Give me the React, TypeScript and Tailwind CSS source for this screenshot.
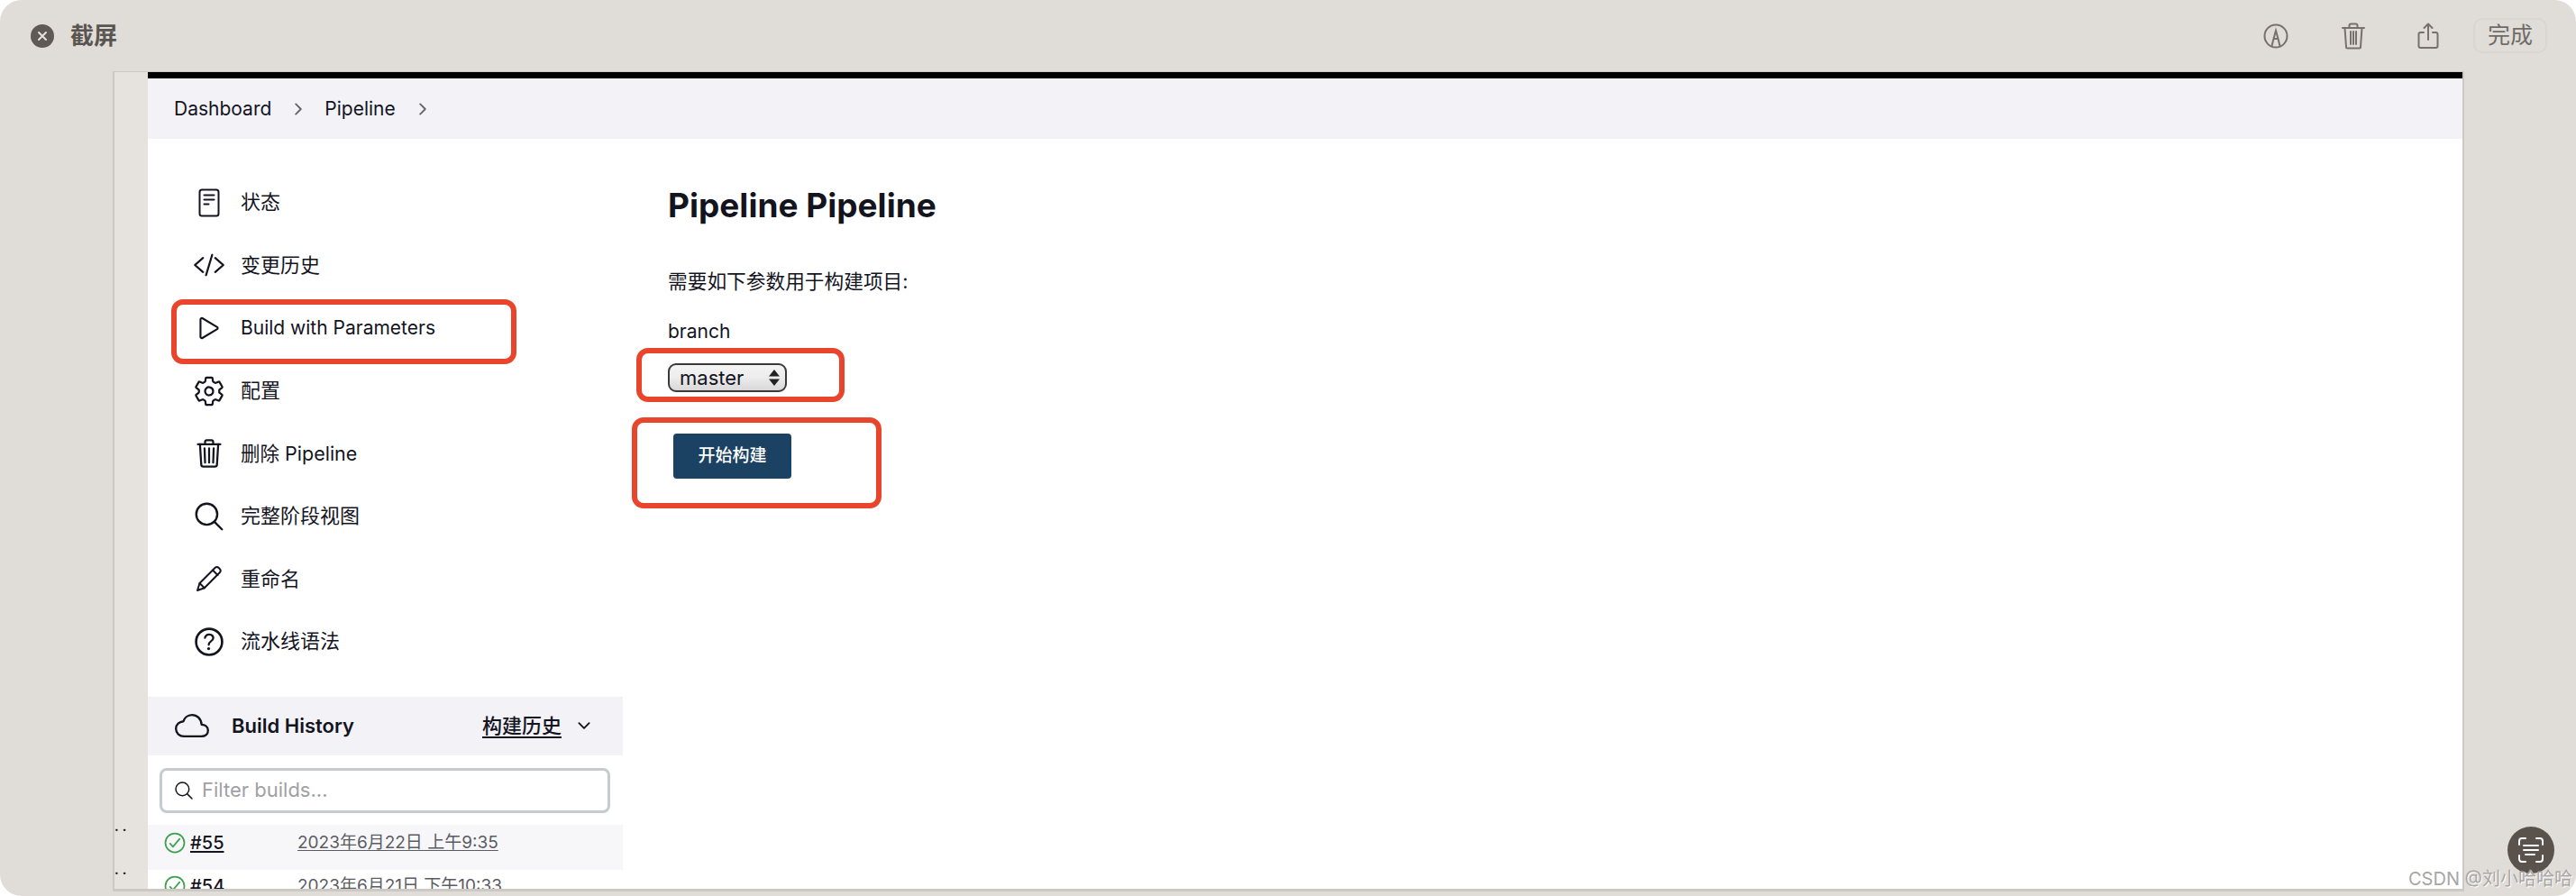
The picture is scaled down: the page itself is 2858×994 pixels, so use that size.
import {
  IoCheckmarkCircleOutline,
  IoChevronDown,
  IoChevronForward,
  IoCloudOutline,
  IoCodeSlashOutline,
  IoHelpCircleOutline,
  IoPlayOutline,
  IoSearchOutline,
  IoSettingsOutline,
  IoTrashOutline,
} from 'react-icons/io5'

const FONT = "font-['Inter','Noto_Sans_CJK_SC',sans-serif]"

function StatusIcon() {
  return (
    <svg width="24" height="32" viewBox="0 0 24 32" fill="none" stroke="#14141f" strokeWidth="2" strokeLinecap="round">
      <rect x="1.5" y="1.5" width="21" height="29" rx="2.5" />
      <path d="M6.5 7.5h11M6.5 12.5h11M6.5 17.5h5" />
    </svg>
  )
}

function PencilIcon() {
  return (
    <svg width="30" height="30" viewBox="0 0 30 30" fill="none" stroke="#14141f" strokeWidth="2" strokeLinejoin="round" strokeLinecap="round">
      <path d="M2 28l2.500-8L21.500 3a3 3 0 0 1 4.200 0l1 1a3 3 0 0 1 0 4.200L9.800 25.200z" />
      <path d="M19 5.500l5.500 5.500M4.500 20l5.300 5.200" />
    </svg>
  )
}

const NAV_ITEMS = [
  { label: '状态', icon: <StatusIcon />, size: 'text-[22px]' },
  { label: '变更历史', icon: <IoCodeSlashOutline size={36} />, size: 'text-[22px]' },
  { label: 'Build with Parameters', icon: <IoPlayOutline size={34} />, size: 'text-[21px]' },
  { label: '配置', icon: <IoSettingsOutline size={36} />, size: 'text-[22px]' },
  { label: '删除 Pipeline', icon: <IoTrashOutline size={36} />, size: 'text-[21.500px]' },
  { label: '完整阶段视图', icon: <IoSearchOutline size={38} />, size: 'text-[22px]' },
  { label: '重命名', icon: <PencilIcon />, size: 'text-[22px]' },
  { label: '流水线语法', icon: <IoHelpCircleOutline size={42} />, size: 'text-[22px]' },
]

const BUILDS = [
  { id: '#55', date: '2023年6月22日 上午9:35', row: 'bg-[#f7f7f9] pt-[2px] pb-[12px]' },
  { id: '#54', date: '2023年6月21日 下午10:33', row: 'bg-white' },
]

function Toolbar() {
  return (
    <div className="flex h-[79px] shrink-0 items-center pl-[34px] pr-[32px]">
      <div className="flex h-[26px] w-[26px] items-center justify-center rounded-full bg-[#5f5a55]">
        <svg width="12" height="12" viewBox="0 0 12 12" stroke="#e6e2de" strokeWidth="2" strokeLinecap="round">
          <path d="M2 2l8 8M10 2l-8 8" />
        </svg>
      </div>
      <span className="ml-[18px] text-[26px] font-bold leading-none text-[#5a5550]">截屏</span>
      <div className="ml-auto flex items-center">
        <svg width="28" height="28" viewBox="0 0 28 28" fill="none" stroke="#76716c" strokeWidth="2">
          <circle cx="14" cy="14" r="12.5" />
          <path d="M9.5 25l2-8 2.5-9 2.500 9 2 8M11.500 17h5" />
        </svg>
        <svg className="ml-[59px]" width="26" height="30" viewBox="0 0 26 30" fill="none" stroke="#76716c" strokeWidth="2" strokeLinecap="round">
          <path d="M1 6h24M8.500 6V3.500A2 2 0 0 1 10.500 1.500h5a2 2 0 0 1 2 2V6M3.500 6l1.500 21a1.500 1.500 0 0 0 1.500 1.500h13a1.500 1.500 0 0 0 1.500-1.500L22.500 6M10 10v14M13 10v14M16 10v14" />
        </svg>
        <svg className="ml-[58px]" width="24" height="30" viewBox="0 0 24 30" fill="none" stroke="#76716c" strokeWidth="2" strokeLinecap="round" strokeLinejoin="round">
          <path d="M7 11H3.500A2 2 0 0 0 1.500 13v13a2 2 0 0 0 2 2h17a2 2 0 0 0 2-2V13a2 2 0 0 0-2-2H17M12 19V1.500M7.500 6L12 1.500 16.500 6" />
        </svg>
        <div className="ml-[38px] flex h-[39px] w-[82px] items-center justify-center rounded-[10px] border-2 border-[#d9d5d1] text-[25px] leading-none text-[#6f6b67]">
          完成
        </div>
      </div>
    </div>
  )
}

function Sidebar() {
  return (
    <aside className="flex w-[527px] shrink-0 flex-col">
      <nav className="flex shrink-0 flex-col pt-[36px]">
        {NAV_ITEMS.map((item) => (
          <div key={item.label} className={`flex h-[69.6px] shrink-0 items-center gap-[19px] pl-[52px] ${item.size}`}>
            <span className="flex w-[32px] shrink-0 items-center justify-center [&>svg]:shrink-0">{item.icon}</span>
            <span>{item.label}</span>
          </div>
        ))}
      </nav>
      <div className="mt-[26px] flex h-[65px] shrink-0 items-center bg-[#f2f2f7] pl-[30px] pr-[33px]">
        <IoCloudOutline size={38} className="shrink-0" />
        <span className="ml-[25px] text-[22px] font-semibold">Build History</span>
        <span className="ml-auto text-[22px] font-medium underline underline-offset-4">构建历史</span>
        <IoChevronDown size={20} className="ml-[15px] shrink-0" />
      </div>
      <div className="shrink-0 pb-[13px] pl-[13px] pr-[14px] pt-[14px]">
        <div className="flex h-[50px] items-center rounded-[8px] border-[3px] border-[#c5cbce] pl-[12px]">
          <IoSearchOutline size={24} className="shrink-0" />
          <span className="ml-[8px] text-[22px] text-[#a0a0a5]">Filter builds...</span>
        </div>
      </div>
      {BUILDS.map((build) => (
        <div key={build.id} className={`flex shrink-0 items-center pl-[16px] ${build.row}`}>
          <IoCheckmarkCircleOutline size={28} className="shrink-0 text-[#3fa14f]" />
          <span className="ml-[3px] flex h-[36px] w-[119px] items-center text-[20px] font-medium underline underline-offset-2">{build.id}</span>
          <span className="text-[19px] text-[#5b5c63] underline underline-offset-2">{build.date}</span>
        </div>
      ))}
    </aside>
  )
}

function BuildForm() {
  return (
    <main className="flex-1 pl-[50px] pt-[50px]">
      <h1 className="text-[37px] font-bold leading-[48px]">Pipeline Pipeline</h1>
      <p className="mt-[45px] text-[21.700px] leading-[30px]">需要如下参数用于构建项目:</p>
      <p className="mt-[26px] text-[21px] leading-[30px]">branch</p>
      <div className="relative mt-[20px] h-[32px] w-[132px]">
        <select className="h-full w-full appearance-none rounded-[9px] border-2 border-[#3a3a3a] bg-gradient-to-b from-[#f4f4f4] via-[#ececec] to-[#d8d8d8] pl-[11px] text-[22px] leading-none outline-none">
          <option>master</option>
        </select>
        <svg className="absolute right-[8px] top-[7px]" width="12" height="18" viewBox="0 0 12 18" fill="#222">
          <path d="M6 0l6 7.500H0zM6 18l6-7.500H0z" />
        </svg>
      </div>
      <button type="button" className="ml-[6px] mt-[46px] h-[50px] w-[131px] rounded-[4px] bg-[#1b4263] text-[19px] font-medium text-white">
        开始构建
      </button>
    </main>
  )
}

function Annotation({ className }: { className: string }) {
  return <div className={`absolute rounded-[13px] border-[6px] border-[#e8452c] ${className}`} />
}

export default function App() {
  return (
    <div className={`${FONT} relative h-[994px] w-[2858px] overflow-hidden bg-white text-[#14141f]`}>
      <div className="flex h-full flex-col rounded-[24px] bg-[#e0dcd8]">
        <Toolbar />
        <div className="mb-[5px] ml-[125px] mr-[124px] flex min-h-0 flex-1 overflow-hidden border-x-2 border-y-0 border-b-[3px] border-[#ccc8c4] border-t-[1px]">
          <div className="relative w-[37px] shrink-0 bg-[#e6e2de]">
            <span className="absolute left-[0px] top-[830px] text-[14px] font-bold leading-none tracking-[4px] text-black">..</span>
            <span className="absolute left-[0px] top-[878px] text-[14px] font-bold leading-none tracking-[4px] text-black">..</span>
          </div>
          <div className="flex min-w-0 flex-1 flex-col bg-white">
            <div className="h-[7px] shrink-0 bg-black" />
            <div className="flex h-[67px] shrink-0 items-center bg-[#f2f2f7] pl-[29px] text-[21px]">
              <span>Dashboard</span>
              <IoChevronForward size={20} className="ml-[20px] shrink-0 text-[#666]" />
              <span className="ml-[19px]">Pipeline</span>
              <IoChevronForward size={20} className="ml-[20px] shrink-0 text-[#666]" />
            </div>
            <div className="flex min-h-0 flex-1">
              <Sidebar />
              <BuildForm />
            </div>
          </div>
        </div>
      </div>

      <Annotation className="left-[190px] top-[332px] h-[72px] w-[383px]" />
      <Annotation className="left-[706px] top-[386px] h-[60px] w-[231px]" />
      <Annotation className="left-[701px] top-[463px] h-[101px] w-[277px]" />

      <div className="absolute left-[2782px] top-[917px] flex h-[52px] w-[52px] items-center justify-center rounded-full bg-[#5a524c]">
        <svg width="28" height="28" viewBox="0 0 28 28" fill="none" stroke="#fff" strokeWidth="2" strokeLinecap="round">
          <path d="M1 8V4a3 3 0 0 1 3-3h4M20 1h4a3 3 0 0 1 3 3v4M27 20v4a3 3 0 0 1-3 3h-4M8 27H4a3 3 0 0 1-3-3v-4M6 9h16M6 14h16M8 19h10" />
        </svg>
      </div>
      <span className="absolute left-[2672px] top-[962px] whitespace-nowrap text-[20px] leading-[26px] text-[#a8a6a4] [text-shadow:1px_1px_0_#fff]">
        CSDN @刘小哈哈哈
      </span>
    </div>
  )
}
